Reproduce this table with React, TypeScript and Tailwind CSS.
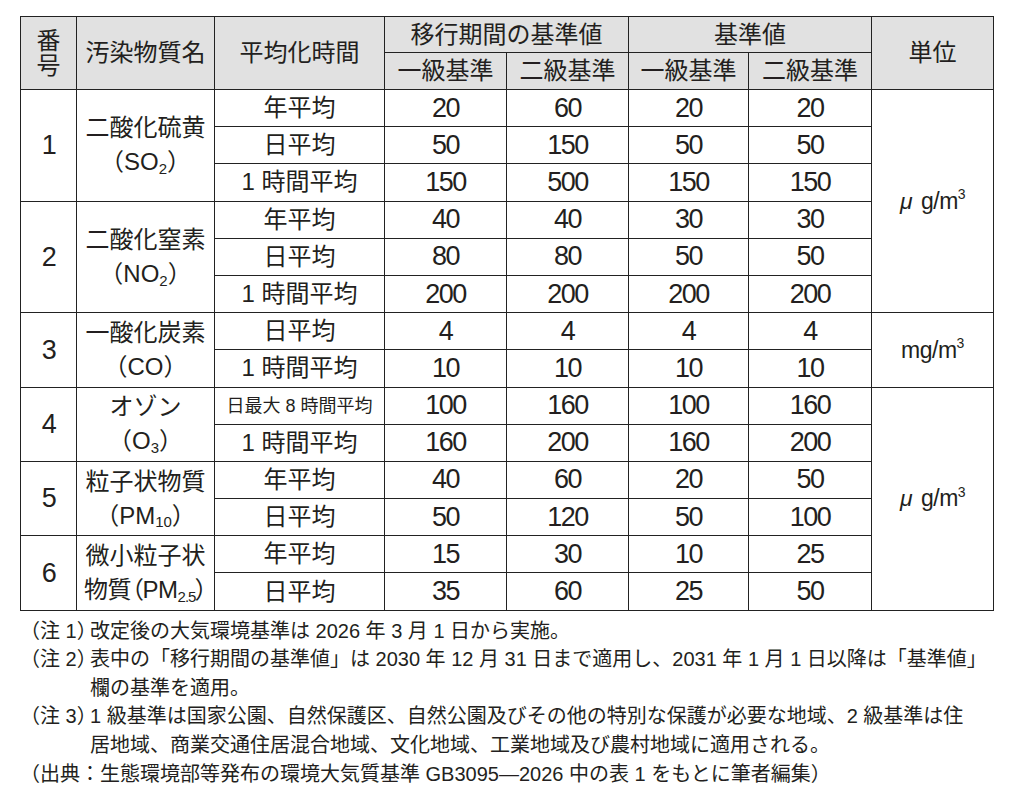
const FONT = "font-['Liberation_Sans','Noto_Sans_CJK_JP',sans-serif]"

type Row = [string, string, string, string, string]

type Group = {
  no: string
  name: React.ReactNode
  rows: Row[]
}

const groups: Group[] = [
  {
    no: "1",
    name: (
      <>
        <div>二酸化硫黄</div>
        <div>
          （SO<sub className="text-[15px]">2</sub>）
        </div>
      </>
    ),
    rows: [
      ["年平均", "20", "60", "20", "20"],
      ["日平均", "50", "150", "50", "50"],
      ["1 時間平均", "150", "500", "150", "150"],
    ],
  },
  {
    no: "2",
    name: (
      <>
        <div>二酸化窒素</div>
        <div>
          （NO<sub className="text-[15px]">2</sub>）
        </div>
      </>
    ),
    rows: [
      ["年平均", "40", "40", "30", "30"],
      ["日平均", "80", "80", "50", "50"],
      ["1 時間平均", "200", "200", "200", "200"],
    ],
  },
  {
    no: "3",
    name: (
      <>
        <div>一酸化炭素</div>
        <div>（CO）</div>
      </>
    ),
    rows: [
      ["日平均", "4", "4", "4", "4"],
      ["1 時間平均", "10", "10", "10", "10"],
    ],
  },
  {
    no: "4",
    name: (
      <>
        <div>オゾン</div>
        <div>
          （O<sub className="text-[15px]">3</sub>）
        </div>
      </>
    ),
    rows: [
      ["日最大 8 時間平均", "100", "160", "100", "160"],
      ["1 時間平均", "160", "200", "160", "200"],
    ],
  },
  {
    no: "5",
    name: (
      <>
        <div>粒子状物質</div>
        <div>
          （PM<sub className="text-[15px]">10</sub>）
        </div>
      </>
    ),
    rows: [
      ["年平均", "40", "60", "20", "50"],
      ["日平均", "50", "120", "50", "100"],
    ],
  },
  {
    no: "6",
    name: (
      <>
        <div>微小粒子状</div>
        <div className="whitespace-nowrap [font-feature-settings:'palt'] tracking-[-0.5px]">
          物質（PM<sub className="text-[15px] tracking-[-1px]">2.5</sub>）
        </div>
      </>
    ),
    rows: [
      ["年平均", "15", "30", "10", "25"],
      ["日平均", "35", "60", "25", "50"],
    ],
  },
]

function Unit({ mu }: { mu: boolean }) {
  return (
    <span className="text-[23px] tracking-[-0.5px] whitespace-nowrap">
      {mu ? <span className="italic mr-[9px]">μ</span> : "m"}
      g/m<sup className="text-[14px] -top-[0.7em]">3</sup>
    </span>
  )
}

export default function App() {
  const cell = "border border-[#222] text-center align-middle p-0"
  const head = `${cell} bg-[#e1e1e1] text-[24px] font-normal`
  const num = `${cell} text-[27px] tracking-[-1.5px]`

  return (
    <div className={`min-h-screen bg-white text-[#231f20] ${FONT}`}>
      <div className="pl-[20px] pt-[16px]">
        <table className="table-fixed border-collapse w-[973px]">
          <colgroup>
            <col className="w-[56px]" />
            <col className="w-[138px]" />
            <col className="w-[170px]" />
            <col className="w-[122px]" />
            <col className="w-[122px]" />
            <col className="w-[120px]" />
            <col className="w-[123px]" />
            <col className="w-[122px]" />
          </colgroup>
          <thead>
            <tr className="h-[36px]">
              <th rowSpan={2} className={`${head} leading-[25px]`}>
                <div>番</div>
                <div>号</div>
              </th>
              <th rowSpan={2} className={head}>汚染物質名</th>
              <th rowSpan={2} className={head}>平均化時間</th>
              <th colSpan={2} className={`${head} leading-none`}>移行期間の基準値</th>
              <th colSpan={2} className={`${head} leading-none`}>基準値</th>
              <th rowSpan={2} className={head}>単位</th>
            </tr>
            <tr className="h-[37px]">
              <th className={`${head} leading-none`}>一級基準</th>
              <th className={`${head} leading-none`}>二級基準</th>
              <th className={`${head} leading-none`}>一級基準</th>
              <th className={`${head} leading-none`}>二級基準</th>
            </tr>
          </thead>
          <tbody>
            {groups.map((g, gi) =>
              g.rows.map((r, ri) => (
                <tr key={`${gi}-${ri}`} className="h-[37.2px]">
                  {ri === 0 && (
                    <>
                      <td rowSpan={g.rows.length} className={num}>
                        {g.no}
                      </td>
                      <td rowSpan={g.rows.length} className={`${cell} text-[24px] leading-[34px]`}>
                        {g.name}
                      </td>
                    </>
                  )}
                  <td
                    className={`${cell} leading-none whitespace-nowrap ${
                      r[0].startsWith("日最大") ? "text-[18px]" : "text-[24px]"
                    }`}
                  >
                    {r[0]}
                  </td>
                  <td className={`${num} leading-none`}>{r[1]}</td>
                  <td className={`${num} leading-none`}>{r[2]}</td>
                  <td className={`${num} leading-none`}>{r[3]}</td>
                  <td className={`${num} leading-none`}>{r[4]}</td>
                  {gi === 0 && ri === 0 && (
                    <td rowSpan={6} className={cell}>
                      <Unit mu />
                    </td>
                  )}
                  {gi === 2 && ri === 0 && (
                    <td rowSpan={2} className={cell}>
                      <Unit mu={false} />
                    </td>
                  )}
                  {gi === 3 && ri === 0 && (
                    <td rowSpan={6} className={cell}>
                      <Unit mu />
                    </td>
                  )}
                </tr>
              ))
            )}
          </tbody>
        </table>

        <div className="mt-[6px] text-[20px] leading-[28.6px]">
          <div className="flex whitespace-nowrap">
            <span className="w-[70px] shrink-0">（注 1）</span>
            <span>改定後の大気環境基準は 2026 年 3 月 1 日から実施。</span>
          </div>
          <div className="flex whitespace-nowrap">
            <span className="w-[70px] shrink-0">（注 2）</span>
            <div>
              <div>表中の「移行期間の基準値」は 2030 年 12 月 31 日まで適用し、2031 年 1 月 1 日以降は「基準値」</div>
              <div>欄の基準を適用。</div>
            </div>
          </div>
          <div className="flex whitespace-nowrap">
            <span className="w-[70px] shrink-0">（注 3）</span>
            <div>
              <div>1 級基準は国家公園、自然保護区、自然公園及びその他の特別な保護が必要な地域、2 級基準は住</div>
              <div>居地域、商業交通住居混合地域、文化地域、工業地域及び農村地域に適用される。</div>
            </div>
          </div>
          <div className="whitespace-nowrap">
            （出典：生態環境部等発布の環境大気質基準 GB3095―2026 中の表 1 をもとに筆者編集）
          </div>
        </div>
      </div>
    </div>
  )
}
